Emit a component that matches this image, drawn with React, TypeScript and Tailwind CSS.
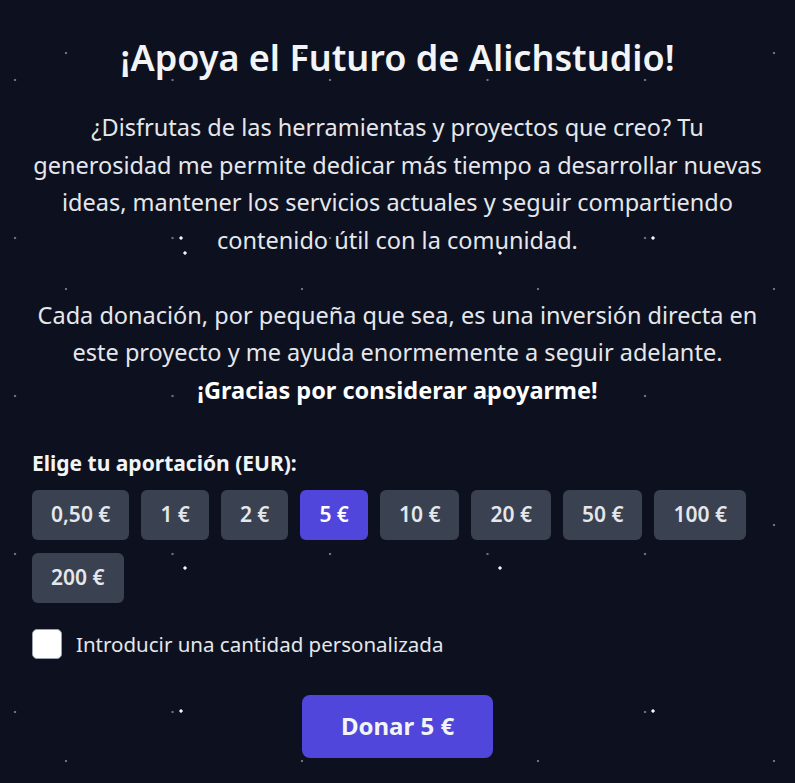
import { useState } from 'react'

const amounts = ['0,50', '1', '2', '5', '10', '20', '50', '100', '200']

function Stars() {
  return (
    <div className="pointer-events-none absolute inset-0">
      <div className="absolute inset-0 bg-[radial-gradient(circle_at_15px_80px,#6b7280_1px,transparent_1.6px)] bg-[size:157.5px_158px]" />
      <div className="absolute inset-0 bg-[radial-gradient(circle_at_66px_53px,#6b7280_1px,transparent_1.6px)] bg-[size:236px_236px]" />
      <div className="absolute inset-0 bg-[radial-gradient(circle_at_181px_238px,#f3f4f6_1.3px,transparent_2px)] bg-[size:472px_473px]" />
      <div className="absolute inset-0 bg-[radial-gradient(circle_at_185px_253px,#f3f4f6_1.3px,transparent_2px)] bg-[size:315px_315px]" />
    </div>
  )
}

export default function App() {
  const [selected, setSelected] = useState('5')
  const [custom, setCustom] = useState(false)

  return (
    <div className="relative min-h-[783px] overflow-hidden bg-[#0d111f] font-['Noto_Sans',sans-serif] text-gray-200">
      <Stars />
      <div className="relative px-8 pt-[38px]">
        <h1 className="text-center text-[36px] leading-10 font-semibold text-gray-100">
          ¡Apoya el Futuro de Alichstudio!
        </h1>
        <p className="-mx-4 mt-[31px] text-center text-[23.5px] leading-[37.5px]">
          ¿Disfrutas de las herramientas y proyectos que creo? Tu
          <br />
          generosidad me permite dedicar más tiempo a desarrollar nuevas
          <br />
          ideas, mantener los servicios actuales y seguir compartiendo
          <br />
          contenido útil con la comunidad.
        </p>
        <p className="-mx-4 mt-[37.5px] text-center text-[23.5px] leading-[37.5px]">
          Cada donación, por pequeña que sea, es una inversión directa en
          <br />
          este proyecto y me ayuda enormemente a seguir adelante.
          <br />
          <strong className="font-bold text-white">¡Gracias por considerar apoyarme!</strong>
        </p>

        <div className="mt-10">
          <p className="text-[21px] leading-7 font-bold text-gray-100">Elige tu aportación (EUR):</p>
          <div className="mt-[13px] flex flex-wrap gap-x-3 gap-y-[13px]">
            {amounts.map((a) => (
              <button
                key={a}
                onClick={() => setSelected(a)}
                className={`h-[50px] rounded-md px-[19px] text-[21px] font-semibold ${
                  selected === a ? 'bg-[#5146dc] text-white' : 'bg-[#3a4150] text-gray-200'
                }`}
              >
                {a} €
              </button>
            ))}
          </div>

          <label className="mt-[26px] flex cursor-pointer items-center gap-[14px]">
            <input
              type="checkbox"
              checked={custom}
              onChange={(e) => setCustom(e.target.checked)}
              className="h-[30px] w-[30px] appearance-none rounded-[5px] border border-gray-400 bg-white"
            />
            <span className="text-[20.5px] text-gray-200">Introducir una cantidad personalizada</span>
          </label>

          <div className="mt-[35px] flex justify-center">
            <button className="h-[63px] rounded-lg bg-[#5146dc] px-[39px] text-[24px] font-bold text-gray-100">
              Donar {selected} €
            </button>
          </div>
        </div>
      </div>
    </div>
  )
}
